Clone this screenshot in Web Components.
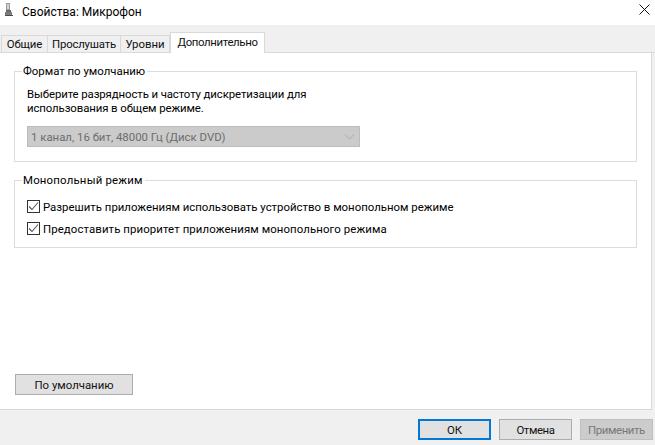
<!DOCTYPE html>
<html lang="ru"><head><meta charset="utf-8"><title>Свойства: Микрофон</title>
<style>
html,body{margin:0;padding:0;height:100%;overflow:hidden}
body{font:11.4px/14px Roboto,"Noto Sans",sans-serif;color:#000;background:#f0f0f0}
</style></head><body>
<template id="t-dialog"><style>
:host{display:flex;flex-direction:column;width:655px;height:445px;background:#f0f0f0}
.title{height:25px;flex:none;background:#fff}
.tabs{height:28px;flex:none}
.panel{height:357px;flex:none;margin-right:3px;box-sizing:border-box;background:#fff;border:solid #d9d9d9;border-width:0 1px 1px 0;padding:10px 14px 0 14px;display:flex;flex-direction:column}
.foot{flex:1}
</style><div class="title"><slot name="title"></slot></div><div class="tabs"><slot name="tabs"></slot></div><div class="panel"><slot></slot></div><div class="foot"><slot name="foot"></slot></div></template>

<template id="t-title"><style>
:host{display:flex;align-items:center;height:25px;padding:0 5px 0 5px;font-size:12px}
svg{flex:none}.t{margin-left:9px;flex:1;position:relative;top:-1px}
.i{position:relative;top:-3px}.x{position:relative;top:-3px}
</style><svg class="i" width="8" height="13" viewBox="0 0 8 13"><path d="M1 0h4v7H1z" fill="#9c9c9c"/><path d="M2 1h2v5H2z" fill="#d2d2d2"/><path d="M1 7h5v2H1z" fill="#6b6b6b"/><path d="M0 9h7v3H0z" fill="#7c7c7c"/><path d="M0 12h8v1H0z" fill="#4d4d4d"/></svg><span class="t"><slot></slot></span><svg class="x" width="11" height="11" viewBox="0 0 11 11"><path d="M.5.5l10 10M10.5.5l-10 10" stroke="#111" stroke-width="1" fill="none"/></svg></template>

<template id="t-tabs"><style>
:host{display:flex;align-items:flex-end;height:28px;box-sizing:border-box;padding-left:1px;border-bottom:1px solid #d9d9d9}
</style><slot></slot></template>

<template id="t-tab"><style>
:host{display:block;box-sizing:border-box;width:var(--w);height:17px;margin-right:-1px;border:1px solid #d9d9d9;border-bottom:0;background:#f0f0f0;line-height:16px;text-align:center;white-space:nowrap;color:#111}
:host([selected]){height:21px;margin-bottom:-1px;background:#fff;position:relative;margin-left:1px;line-height:18px;margin-right:0}
</style><slot></slot></template>

<template id="t-group"><style>
:host{display:block}
fieldset{margin:0;padding:0;border:1px solid #dcdcdc;box-sizing:border-box;height:var(--h,90px);display:block}
legend{padding:0 2px 0 1px;margin-left:7px;line-height:16px;height:16px}
</style><fieldset><legend><slot name="legend"></slot></legend><slot></slot></fieldset></template>

<template id="t-select"><style>
:host{display:flex;align-items:center;justify-content:space-between;box-sizing:border-box;width:333px;height:21px;background:#cbcbcb;border:1px solid #bcbcbc;padding:0 3px 0 3px;color:#6d6d6d}
svg{flex:none;margin-right:1px}
</style><span><slot></slot></span><svg width="11" height="6" viewBox="0 0 11 6"><path d="M1 .5l4.5 4.5L10 .5" stroke="#a8a8a8" fill="none"/></svg></template>

<template id="t-check"><style>
:host{display:flex;align-items:center;height:16px;white-space:nowrap}
.b{flex:none;box-sizing:border-box;width:13px;height:13px;border:1px solid #333;background:#fff;margin-right:3px;display:block;position:relative;top:-1px}
svg{display:block}
</style><span class="b"><svg width="11" height="11" viewBox="0 0 11 11"><path d="M1 5.5l3 3 6-7" stroke="#555" stroke-width="1.1" fill="none"/></svg></span><span><slot></slot></span></template>

<template id="t-btn"><style>
:host{display:flex;align-items:center;justify-content:center;box-sizing:border-box;width:var(--w,73px);height:21px;background:#e1e1e1;border:1px solid #adadad;white-space:nowrap;color:#111}
:host([default]){border:2px solid #0078d7}
:host([disabled]){background:#ccc;border-color:#bfbfbf;color:#787878}
</style><slot></slot></template>

<template id="t-foot"><style>
:host{display:flex;justify-content:flex-end;gap:8px;padding:9px 2px 0 0}
</style><slot></slot></template>

<template id="t-text"><style>:host{display:block;}</style><slot></slot></template>

<x-dialog>
  <x-title slot="title">Свойства: Микрофон</x-title>
  <x-tabs slot="tabs">
    <x-tab style="--w:47px;letter-spacing:-.1px">Общие</x-tab><x-tab style="--w:74px;letter-spacing:-.2px">Прослушать</x-tab><x-tab style="--w:50px">Уровни</x-tab><x-tab selected style="--w:95px;letter-spacing:-.35px">Дополнительно</x-tab>
  </x-tabs>
  <x-group style="--h:99px">
    <span slot="legend">Формат по умолчанию</span>
    <x-text style="margin:8px 0 0 12px;letter-spacing:-.1px">Выберите разрядность и частоту дискретизации для<br>использования в общем режиме.</x-text>
    <x-select style="margin:11px 0 0 12px">1 канал, 16 бит, 48000 Гц (Диск DVD)</x-select>
  </x-group>
  <x-group style="--h:76px;margin-top:10px">
    <span slot="legend" style="letter-spacing:.2px">Монопольный режим</span>
    <x-check style="margin:11px 0 0 12px">Разрешить приложениям использовать устройство в монопольном режиме</x-check>
    <x-check style="margin:6px 0 0 12px;letter-spacing:.1px">Предоставить приоритет приложениям монопольного режима</x-check>
  </x-group>
  <x-btn style="--w:118px;margin:126px 0 0 1px">По умолчанию</x-btn>
  <x-foot slot="foot">
    <x-btn default>ОК</x-btn><x-btn style="letter-spacing:-.4px">Отмена</x-btn><x-btn disabled style="letter-spacing:-.4px">Применить</x-btn>
  </x-foot>
</x-dialog>
<script>
for(const [tag,id] of [['x-dialog','t-dialog'],['x-title','t-title'],['x-tabs','t-tabs'],['x-tab','t-tab'],['x-group','t-group'],['x-select','t-select'],['x-check','t-check'],['x-btn','t-btn'],['x-foot','t-foot'],['x-text','t-text']]){
  customElements.define(tag,class extends HTMLElement{constructor(){super();this.attachShadow({mode:'open'}).appendChild(document.getElementById(id).content.cloneNode(true));}});
}
</script>
</body></html>
